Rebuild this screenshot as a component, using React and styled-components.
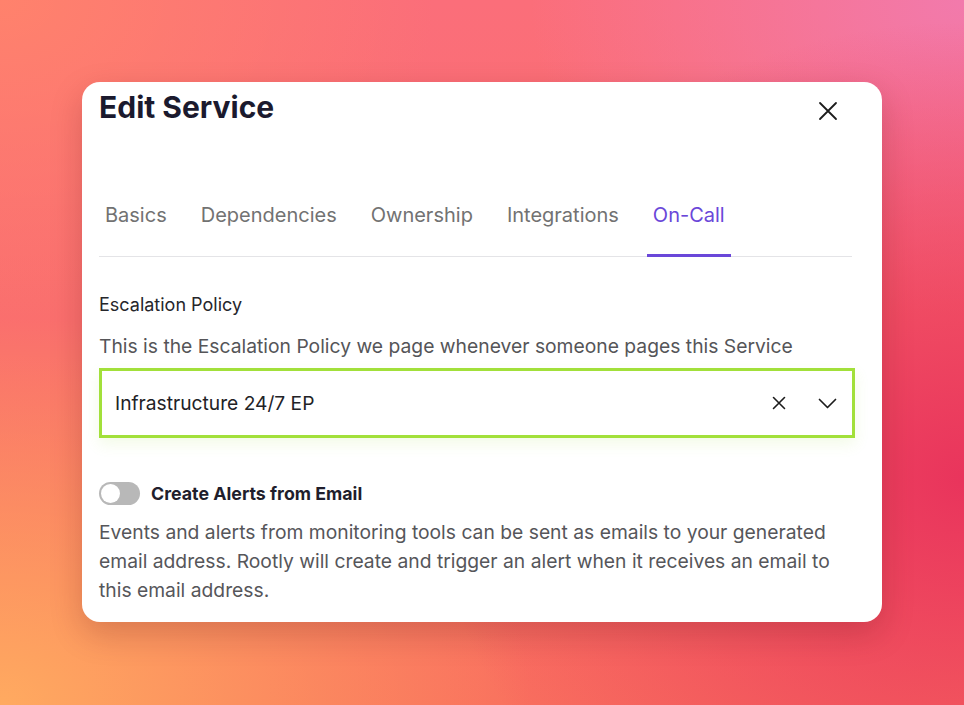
import React, { useState } from "react";
import styled, { createGlobalStyle } from "styled-components";

const GlobalStyle = createGlobalStyle`
  html, body {
    margin: 0;
    padding: 0;
    height: 100%;
  }
  body {
    font-family: Inter, "Noto Sans", "Liberation Sans", sans-serif;
    -webkit-font-smoothing: antialiased;
  }
  #root {
    height: 100%;
  }
`;

const tabs = ["Basics", "Dependencies", "Ownership", "Integrations", "On-Call"];

export default function App() {
  const [active, setActive] = useState("On-Call");
  const [alerts, setAlerts] = useState(false);

  return (
    <>
      <GlobalStyle />
      <Backdrop>
        <Card>
          <Header>
            <Title>Edit Service</Title>
            <CloseButton aria-label="Close">
              <svg width="20" height="20" viewBox="0 0 20 20" fill="none">
                <path d="M2 2 L18 18 M18 2 L2 18" stroke="#1c1c1c" strokeWidth="1.8" strokeLinecap="round" />
              </svg>
            </CloseButton>
          </Header>

          <TabBar>
            {tabs.map((tab) => (
              <Tab key={tab} active={tab === active} onClick={() => setActive(tab)}>
                {tab}
              </Tab>
            ))}
          </TabBar>

          <Section>
            <FieldLabel>Escalation Policy</FieldLabel>
            <Hint>This is the Escalation Policy we page whenever someone pages this Service</Hint>
            <Select>
              <SelectValue>Infrastructure 24/7 EP</SelectValue>
              <SelectIcons>
                <IconButton aria-label="Clear">
                  <svg width="14" height="14" viewBox="0 0 14 14" fill="none">
                    <path d="M1.5 1.5 L12.5 12.5 M12.5 1.5 L1.5 12.5" stroke="#1c1c1c" strokeWidth="1.6" strokeLinecap="round" />
                  </svg>
                </IconButton>
                <IconButton aria-label="Open">
                  <svg width="19" height="11" viewBox="0 0 19 11" fill="none">
                    <path d="M1.5 1.5 L9.5 9.5 L17.5 1.5" stroke="#1c1c1c" strokeWidth="1.7" strokeLinecap="round" strokeLinejoin="round" />
                  </svg>
                </IconButton>
              </SelectIcons>
            </Select>
          </Section>

          <ToggleRow>
            <Switch on={alerts} onClick={() => setAlerts(!alerts)}>
              <Knob on={alerts} />
            </Switch>
            <ToggleLabel>Create Alerts from Email</ToggleLabel>
          </ToggleRow>
          <Body>
            Events and alerts from monitoring tools can be sent as emails to your generated
            email address. Rootly will create and trigger an alert when it receives an email to
            this email address.
          </Body>
        </Card>
      </Backdrop>
    </>
  );
}

const Backdrop = styled.div`
  height: 100%;
  min-height: 705px;
  box-sizing: border-box;
  padding-top: 82px;
  display: flex;
  justify-content: center;
  align-items: flex-start;
  background:
    radial-gradient(ellipse 55% 65% at 100% 68%, rgba(233, 52, 92, 1) 0%, rgba(233, 52, 92, 0) 100%),
    radial-gradient(ellipse 45% 45% at 100% 0%, rgba(242, 122, 172, 1) 0%, rgba(242, 122, 172, 0) 100%),
    radial-gradient(ellipse 55% 55% at 0% 100%, rgba(255, 170, 96, 1) 0%, rgba(255, 170, 96, 0) 100%),
    radial-gradient(ellipse 45% 45% at 0% 0%, rgba(255, 130, 108, 1) 0%, rgba(255, 130, 108, 0) 100%),
    linear-gradient(180deg, #fb6e7a 0%, #f9705e 100%);
`;

const Card = styled.div`
  width: 800px;
  height: 540px;
  box-sizing: border-box;
  background: #fff;
  border-radius: 18px;
  padding: 7px 30px 0 17px;
  box-shadow: 0 12px 32px rgba(90, 20, 20, 0.22);
  overflow: hidden;
`;

const Header = styled.div`
  display: flex;
  justify-content: space-between;
  align-items: flex-start;
`;

const Title = styled.h1`
  margin: 0;
  font-size: 30px;
  line-height: 36px;
  font-weight: 700;
  color: #1b1a2e;
`;

const CloseButton = styled.button`
  border: 0;
  background: none;
  padding: 0;
  margin: 12px 14px 0 0;
  display: flex;
  cursor: pointer;
`;

const TabBar = styled.div`
  display: flex;
  gap: 22px;
  margin-top: 78px;
  border-bottom: 1px solid #e4e4e7;
`;

const Tab = styled.div`
  padding: 0 6px 27px;
  font-size: 20px;
  line-height: 24px;
  color: ${(p) => (p.active ? "#6a47d9" : "#727272")};
  border-bottom: 3px solid ${(p) => (p.active ? "#6a47d9" : "transparent")};
  margin-bottom: -1px;
  cursor: pointer;
`;

const Section = styled.div`
  margin-top: 37px;
`;

const FieldLabel = styled.div`
  font-size: 18px;
  line-height: 22px;
  color: #26262b;
`;

const Hint = styled.div`
  margin-top: 19px;
  font-size: 19.3px;
  line-height: 22px;
  color: #555558;
`;

const Select = styled.div`
  margin-top: 11px;
  margin-right: -3px;
  height: 70px;
  box-sizing: border-box;
  border: 3.5px solid #a2e03a;
  display: flex;
  align-items: center;
  justify-content: space-between;
  padding: 0 15px 0 13px;
  box-shadow: 0 6px 14px rgba(160, 220, 60, 0.12);
`;

const SelectValue = styled.span`
  font-size: 19.2px;
  color: #222226;
`;

const SelectIcons = styled.div`
  display: flex;
  align-items: center;
  gap: 32px;
`;

const IconButton = styled.span`
  display: flex;
  align-items: center;
`;

const ToggleRow = styled.div`
  margin-top: 44px;
  display: flex;
  align-items: center;
  gap: 11px;
`;

const Switch = styled.div`
  position: relative;
  width: 41px;
  height: 23px;
  border-radius: 12px;
  background: ${(p) => (p.on ? "#6a47d9" : "#b8b8b8")};
  cursor: pointer;
`;

const Knob = styled.div`
  position: absolute;
  top: 2px;
  left: ${(p) => (p.on ? "20px" : "2px")};
  width: 19px;
  height: 19px;
  border-radius: 50%;
  background: #fff;
`;

const ToggleLabel = styled.span`
  font-size: 17.8px;
  font-weight: 700;
  color: #1f1e2c;
`;

const Body = styled.p`
  margin: 13px 0 0;
  font-size: 19.3px;
  line-height: 29px;
  color: #56565a;
  max-width: 745px;
`;
